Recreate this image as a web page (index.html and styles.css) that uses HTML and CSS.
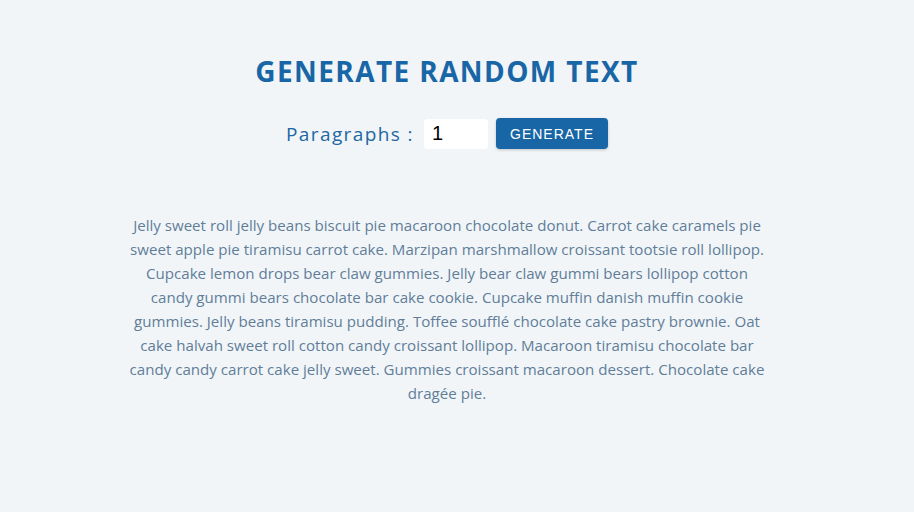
FILE: index.html
```html
<!DOCTYPE html>
<html lang="en">
<head>
<meta charset="utf-8">
<title>Lorem Ipsum Generator</title>
<link rel="stylesheet" href="styles.css">
</head>
<body>
<section class="section-center">
  <h3 class="title">Generate random text</h3>
  <form class="lorem-form">
    <label class="label" for="amount">Paragraphs :</label>
    <input class="amount" type="number" id="amount" name="amount" value="1">
    <button class="btn" type="button">Generate</button>
  </form>
  <article class="lorem-text">
    <p>Jelly sweet roll jelly beans biscuit pie macaroon chocolate donut. Carrot cake caramels pie sweet apple pie tiramisu carrot cake. Marzipan marshmallow croissant tootsie roll lollipop. Cupcake lemon drops bear claw gummies. Jelly bear claw gummi bears lollipop cotton candy gummi bears chocolate bar cake cookie. Cupcake muffin danish muffin cookie gummies. Jelly beans tiramisu pudding. Toffee soufflé chocolate cake pastry brownie. Oat cake halvah sweet roll cotton candy croissant lollipop. Macaroon tiramisu chocolate bar candy candy carrot cake jelly sweet. Gummies croissant macaroon dessert. Chocolate cake dragée pie.</p>
  </article>
</section>
</body>
</html>
```
FILE: styles.css
```css
* { box-sizing: border-box; margin: 0; padding: 0; }
html, body { height: 100%; }
body {
  background: #f1f5f8;
  font-family: "Open Sans", "Noto Sans", sans-serif;
  color: #617d98;
  padding-right: 20px;
}
.section-center {
  width: 640px;
  margin: 0 auto;
  padding-top: 54px;
  text-align: center;
}
.title {
  font-size: 28px;
  font-weight: 700;
  letter-spacing: 1.4px;
  text-transform: uppercase;
  color: #1866a6;
  line-height: 34px;
}
.lorem-form {
  display: flex;
  justify-content: center;
  align-items: center;
  margin-top: 30px;
}
.label {
  font-size: 19px;
  letter-spacing: 1.4px;
  color: #1d67a2;
}
.amount {
  width: 64px;
  height: 30px;
  padding: 2px 8px;
  margin: 0 8px 0 10px;
  font-family: "Liberation Sans", Arial, sans-serif;
  font-size: 20px;
  border: none;
  border-radius: 4px;
  background: #fff;
  color: #000;
  -moz-appearance: textfield;
}
.amount::-webkit-inner-spin-button,
.amount::-webkit-outer-spin-button { -webkit-appearance: none; margin: 0; }
.btn {
  width: 112px;
  height: 31px;
  background: #1866a6;
  color: #fff;
  border: none;
  border-radius: 4px;
  font-family: "Liberation Sans", Arial, sans-serif;
  font-size: 14px;
  letter-spacing: 1px;
  text-transform: uppercase;
  box-shadow: 0 1px 3px rgba(0,0,0,0.2);
}
.lorem-text {
  margin-top: 64px;
}
.lorem-text p {
  font-size: 15.1px;
  line-height: 24px;
}
```
